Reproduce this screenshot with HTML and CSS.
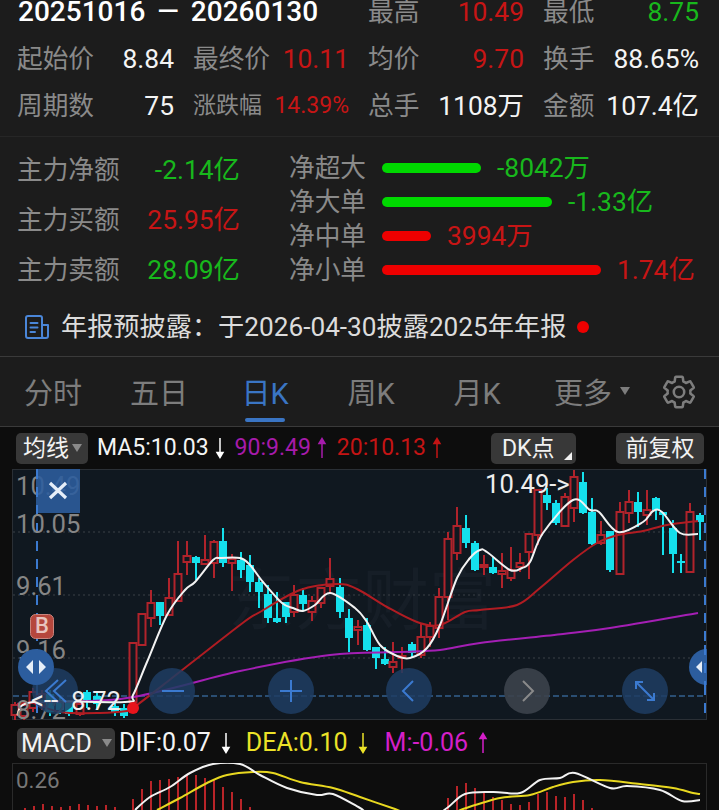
FILE: index.html
```html
<!DOCTYPE html>
<html lang="zh-CN">
<head>
<meta charset="utf-8">
<title>日K</title>
<link rel="stylesheet" href="styles.css">
</head>
<body>
<section class="stats">
  <div class="cell span2"><span class="range">20251016 — 20260130</span></div>
  <div class="cell"><span class="lbl">最高</span><span class="red">10.49</span></div>
  <div class="cell"><span class="lbl">最低</span><span class="green">8.75</span></div>
  <div class="cell"><span class="lbl">起始价</span><span class="white">8.84</span></div>
  <div class="cell"><span class="lbl">最终价</span><span class="red">10.11</span></div>
  <div class="cell"><span class="lbl">均价</span><span class="red">9.70</span></div>
  <div class="cell"><span class="lbl">换手</span><span class="white">88.65%</span></div>
  <div class="cell"><span class="lbl">周期数</span><span class="white">75</span></div>
  <div class="cell small"><span class="lbl">涨跌幅</span><span class="red">14.39%</span></div>
  <div class="cell"><span class="lbl">总手</span><span class="white">1108万</span></div>
  <div class="cell"><span class="lbl">金额</span><span class="white">107.4亿</span></div>
</section>

<section class="flows">
  <div class="flow-main">
    <div class="cell"><span class="lbl">主力净额</span><span class="green">-2.14亿</span></div>
    <div class="cell"><span class="lbl">主力买额</span><span class="red">25.95亿</span></div>
    <div class="cell"><span class="lbl">主力卖额</span><span class="green">28.09亿</span></div>
  </div>
  <div class="flow-bars">
    <div class="flow"><span class="lbl flow-lbl">净超大</span><i class="bar bar-green" style="width:99px"></i><span class="green">-8042万</span></div>
    <div class="flow"><span class="lbl flow-lbl">净大单</span><i class="bar bar-green" style="width:170px"></i><span class="green">-1.33亿</span></div>
    <div class="flow"><span class="lbl flow-lbl">净中单</span><i class="bar bar-red" style="width:49px"></i><span class="red">3994万</span></div>
    <div class="flow"><span class="lbl flow-lbl">净小单</span><i class="bar bar-red" style="width:219px"></i><span class="red">1.74亿</span></div>
  </div>
</section>

<section class="notice">
  <svg class="doc-icon" viewBox="0 0 24 24" fill="none" stroke="#4a86d8" stroke-width="2" stroke-linecap="round" stroke-linejoin="round">
    <path d="M17 23H3a2 2 0 0 1-2-2V3a2 2 0 0 1 2-2h12a2 2 0 0 1 2 2v18a2 2 0 0 0 2 2h2a2 2 0 0 0 2-2V10h-6"/>
    <path d="M5.500 8h7M5.500 12.500h7M5.500 17h4.500"/>
  </svg>
  <span class="notice-text">年报预披露：于2026-04-30披露2025年年报</span>
  <i class="notice-dot"></i>
</section>

<nav class="tabs">
  <span class="tab">分时</span>
  <span class="tab">五日</span>
  <span class="tab tab-active">日K</span>
  <span class="tab">周K</span>
  <span class="tab">月K</span>
  <span class="tab">更多<i class="tab-caret"></i></span>
  <svg class="gear" viewBox="0 0 24 24" fill="none" stroke="#7d7d7d" stroke-width="1.600" stroke-linejoin="round">
    <path d="M19.140 12.940c.04-.3.06-.61.06-.94 0-.32-.02-.64-.07-.94l2.030-1.580c.18-.14.23-.41.12-.61l-1.920-3.320c-.12-.22-.37-.29-.59-.22l-2.390.96c-.5-.38-1.030-.7-1.620-.94l-.36-2.540c-.04-.24-.24-.41-.48-.41h-3.840c-.24 0-.43.17-.47.41l-.36 2.540c-.59.24-1.130.57-1.620.94l-2.390-.96c-.22-.08-.47 0-.59.22L2.740 8.870c-.12.21-.08.47.12.61l2.030 1.580c-.05.3-.09.63-.09.94s.02.64.07.94l-2.030 1.580c-.18.14-.23.41-.12.61l1.920 3.320c.12.22.37.29.59.22l2.390-.96c.5.38 1.030.7 1.620.94l.36 2.540c.05.24.24.41.48.41h3.840c.24 0 .44-.17.47-.41l.36-2.540c.59-.24 1.130-.56 1.620-.94l2.390.96c.22.08.47 0 .59-.22l1.920-3.320c.12-.22.07-.47-.12-.61l-2.010-1.580z"/>
    <circle cx="12" cy="12" r="3.300"/>
  </svg>
</nav>

<div class="toolbar">
  <span class="chip chip-ma">均线<i class="chip-caret"></i></span>
  <span class="legend l-white">MA5:10.03</span>
  <svg class="arrow" viewBox="0 0 12 22"><path d="M6 1V19M3 15.500L6 20.500L9 15.500Z" stroke="#fff" fill="#fff" stroke-width="1.500"/></svg>
  <span class="legend l-purple">90:9.49</span>
  <svg class="arrow" viewBox="0 0 12 22"><path d="M6 21V3M3 6.500L6 1.500L9 6.500Z" stroke="#a61bab" fill="#a61bab" stroke-width="1.500"/></svg>
  <span class="legend l-red">20:10.13</span>
  <svg class="arrow" viewBox="0 0 12 22"><path d="M6 21V3M3 6.500L6 1.500L9 6.500Z" stroke="#c41414" fill="#c41414" stroke-width="1.500"/></svg>
  <span class="chip chip-dk">DK点<i class="chip-corner"></i></span>
  <span class="chip chip-fq">前复权</span>
</div>

<div class="kline">
  <svg class="chart-svg" viewBox="0 469 719 251" width="719" height="251">
    <rect class="frame" x="12.500" y="469.500" width="694" height="250"/>
    <text class="watermark" x="228" y="624">东方财富</text>
    <g class="grid">
      <path d="M13 532H706M13 595H706M13 658H706"/>
    </g>
    <path class="hline" d="M13 696H706"/>
    <g id="candles"></g>
    <g id="ma-lines"></g>
    <text class="price" x="16" y="495">10.49</text>
    <rect class="close-box" x="36" y="469" width="44" height="44"/>
    <path class="vline" d="M37 469V720M705 469V720"/>
    <path class="close-x" d="M50 483L66 498M66 483L50 498"/>
    <text class="price" x="16" y="533">10.05</text>
    <text class="price" x="16" y="595">9.61</text>
    <text class="price" x="16" y="659">9.16</text>
    <text class="price" x="16" y="719">8.72</text>

    <rect class="b-badge" x="30.500" y="614.500" width="23" height="24" rx="5"/>
    <text class="b-text" x="42" y="633">B</text>

    <circle class="btn" cx="55" cy="691" r="23"/>
    <path class="ico" d="M58 680L46 691L58 702M66 680L54 691L66 702"/>
    <circle class="btn" cx="172" cy="691" r="23"/>
    <path class="ico" d="M162 691H184"/>
    <circle class="btn" cx="291" cy="691" r="23"/>
    <path class="ico" d="M280 691H302M291 680V702"/>
    <circle class="btn" cx="409" cy="691" r="23"/>
    <path class="ico" d="M413 681L403 691L413 701"/>
    <circle class="btn-off" cx="527" cy="691" r="23"/>
    <path class="ico-off" d="M523 681L533 691L523 701"/>
    <circle class="btn" cx="645" cy="691" r="23"/>
    <path class="ico" d="M636 682L654 700M636 689V682H643M654 693V700H647"/>

    <circle class="handle" cx="36" cy="667" r="18"/>
    <path class="handle-ico" d="M33 660V674L26 667ZM39 660V674L46 667Z"/>
    <circle class="handle" cx="707" cy="667" r="18"/>
    <path class="handle-ico" d="M702 661V673L696 667Z"/>
    <rect class="handle-clip" x="707" y="640" width="12" height="60"/>
    <path class="vline" d="M705 645V690"/>

    <circle class="dot" cx="133" cy="708" r="6"/>
    <text class="extreme" x="31" y="709">&lt;--</text>
    <text class="extreme" x="71" y="710">8.72</text>
    <text class="extreme" x="485" y="493">10.49-&gt;</text>
  </svg>
</div>

<div class="toolbar toolbar-macd">
  <span class="chip chip-macd">MACD<i class="chip-caret"></i></span>
  <span class="legend l-white">DIF:0.07</span>
  <svg class="arrow" viewBox="0 0 12 22"><path d="M6 1V19M3 15.500L6 20.500L9 15.500Z" stroke="#fff" fill="#fff" stroke-width="1.500"/></svg>
  <span class="legend l-yellow">DEA:0.10</span>
  <svg class="arrow arrow-dea" viewBox="0 0 12 22"><path d="M6 1V19M3 15.500L6 20.500L9 15.500Z" stroke="#ece228" fill="#ece228" stroke-width="1.500"/></svg>
  <span class="legend l-magenta">M:-0.06</span>
  <svg class="arrow" viewBox="0 0 12 22"><path d="M6 21V3M3 6.500L6 1.500L9 6.500Z" stroke="#d41fc8" fill="#d41fc8" stroke-width="1.500"/></svg>
</div>

<div class="macd">
  <svg class="chart-svg" viewBox="0 763 719 47" width="719" height="47">
    <rect class="frame-macd" x="12.500" y="763.500" width="694" height="60"/>
    <g id="macd-bars"></g>
    <g id="macd-lines"></g>
    <text class="price-sm" x="16" y="788">0.26</text>
  </svg>
</div>
<script src="script.js"></script>
</body>
</html>
```

FILE: styles.css
```css
* { box-sizing: border-box; }
html, body { margin: 0; padding: 0; }
body {
  width: 719px;
  height: 810px;
  overflow: hidden;
  background: #1c1c1c;
  font-family: Roboto, "Noto Sans CJK SC", sans-serif;
  font-size: 26px;
  color: #fff;
}
i { display: block; }

.lbl { color: #8a8a8a; font-size: 25.7px; }
.red { color: #c71515; font-size: 26.4px; }
.green { color: #18b81c; font-size: 26.4px; }
.white { color: #f4f4f4; font-size: 26.4px; }

.stats {
  margin-top: -12px;
  height: 149px;
  padding: 0 20px 0 17px;
  display: grid;
  grid-template-columns: 157px repeat(3, 156px);
  grid-auto-rows: 47px;
  column-gap: 19px;
  border-bottom: 1px solid #262626;
}
.span2 { grid-column: span 2; }
.cell {
  display: flex;
  justify-content: space-between;
  align-items: center;
  line-height: 30px;
  white-space: nowrap;
}
.small span { font-size: 23px; }
.range { font-size: 28px; font-weight: 500; color: #fff; margin-left: 1px; word-spacing: 5px; }

.flows {
  height: 162px;
  padding: 8px 0 0 17px;
  display: flex;
}
.flow-main {
  width: 223px;
  display: grid;
  grid-auto-rows: 50px;
}
.flow-bars {
  margin-left: 49px;
  padding-top: 6px;
  display: grid;
  grid-auto-rows: 34px;
}
.flow {
  display: flex;
  align-items: center;
  line-height: 30px;
  white-space: nowrap;
}
.flow-lbl { width: 93px; }
.bar { height: 10px; border-radius: 5px; margin-right: 16px; }
.bar-green { background: #00d800; }
.bar-red { background: #ee0000; }

.notice {
  height: 58px;
  padding: 0 0 1px 25px;
  display: flex;
  align-items: center;
  border-bottom: 1px solid #3a3a3a;
}
.doc-icon { width: 24px; height: 24px; flex: none; }
.notice-text { margin-left: 12px; color: #dcdcdc; font-size: 26.2px; line-height: 30px; white-space: nowrap; }
.notice-dot {
  width: 12px;
  height: 12px;
  margin-left: 11px;
  border-radius: 50%;
  background: #ee0000;
}

.tabs {
  height: 70px;
  display: flex;
  align-items: center;
  border-bottom: 1px solid #3a3a3a;
  padding-top: 4px;
}
.tab {
  position: relative;
  flex: none;
  width: 106px;
  display: flex;
  justify-content: center;
  align-items: center;
  font-size: 29px;
  line-height: 40px;
  color: #7d7d7d;
}
.tab-active { color: #3a75c4; }
.tab-active::after {
  content: "";
  position: absolute;
  left: 33px;
  bottom: -8px;
  width: 40px;
  height: 4px;
  border-radius: 2px;
  background: #3a75c4;
}
.tab-caret {
  width: 0;
  height: 0;
  margin: -6px -18px 0 8px;
  border-left: 5px solid transparent;
  border-right: 5px solid transparent;
  border-top: 8px solid #7d7d7d;
}
.gear { width: 38px; height: 38px; margin: -4px 0 0 24px; flex: none; }

.toolbar {
  height: 42px;
  padding: 0 15px 0 16px;
  display: flex;
  align-items: center;
  background: #0d0d0d;
  font-size: 23px;
  white-space: nowrap;
}
.chip {
  height: 31px;
  display: flex;
  align-items: center;
  border-radius: 5px;
  background: #383838;
  color: #f2f2f2;
  line-height: 31px;
  flex: none;
}
.chip-ma { width: 72px; padding-left: 7px; margin-right: 9px; }
.chip-caret {
  width: 0;
  height: 0;
  margin-left: 3px;
  border-left: 5px solid transparent;
  border-right: 5px solid transparent;
  border-top: 8px solid #8a8a8a;
}
.chip-dk { position: relative; width: 85px; padding-left: 11px; margin-left: auto; }
.chip-corner {
  position: absolute;
  right: 4px;
  bottom: 4px;
  width: 0;
  height: 0;
  border-left: 8px solid transparent;
  border-bottom: 8px solid #f2f2f2;
}
.chip-fq { width: 88px; margin-left: 40px; justify-content: center; }
.legend { line-height: 30px; }
.l-white { color: #f4f4f4; }
.l-purple { color: #a61bab; }
.l-red { color: #c41414; }
.l-yellow { color: #ece228; }
.l-magenta { color: #d41fc8; }
.arrow { width: 12px; height: 22px; margin: 0 9px 0 5px; flex: none; }

.kline { height: 251px; background: #0d0d0d; }
.chart-svg { display: block; }
.frame { fill: #101820; stroke: #2a2f35; }
.frame-macd { fill: #0d0d0d; stroke: #2a2a2a; }
.grid path { stroke: #3a4046; stroke-width: 1; stroke-dasharray: 2 3; fill: none; }
.hline { stroke: #33608f; stroke-width: 1.500; stroke-dasharray: 6 3; fill: none; }
.vline { stroke: #3b7ad0; stroke-width: 2; stroke-dasharray: 10 8; fill: none; }
.watermark {
  font-family: "Noto Sans CJK SC", sans-serif;
  font-size: 67px;
  fill: #161e27;
}
.price { font-family: Roboto, sans-serif; font-size: 25.6px; fill: #868686; }
.price-sm { font-family: Roboto, sans-serif; font-size: 22.4px; fill: #777; }
.extreme { font-family: Roboto, sans-serif; font-size: 25.6px; fill: #eee; }
.close-box { fill: #2c5d9e; fill-opacity: 0.88; }
.close-x { stroke: #e6eef8; stroke-width: 3.200; fill: none; }
.b-badge { fill: #b5473d; stroke: #c9857d; stroke-width: 1; }
.b-text { font-family: Roboto, sans-serif; font-size: 22px; font-weight: 500; fill: #e8c4bf; text-anchor: middle; }
.btn { fill: #1f3d63; fill-opacity: 0.85; }
.btn-off { fill: #3c434b; fill-opacity: 0.9; }
.ico { stroke: #3b7ad0; stroke-width: 2; fill: none; }
.ico-off { stroke: #8a8a8a; stroke-width: 2; fill: none; }
.handle { fill: #2c5d9e; }
.handle-ico { fill: #e6eef8; }
.handle-clip { fill: #0d0d0d; }
.dot { fill: #e8141c; }

.toolbar-macd { height: 43px; padding: 0 0 0 17px; font-size: 25px; }
.chip-macd { width: 98px; padding-left: 4px; margin-right: 4px; margin-top: 3px; }
.chip-macd .chip-caret { margin-left: 10px; }
.toolbar-macd .legend { margin-top: 3px; }
.toolbar-macd .arrow { margin: 3px 14px 0 9px; }
.toolbar-macd .arrow-dea { margin-right: 16px; }
.macd { height: 47px; background: #0d0d0d; }
```

FILE: script.js
```js
var NS = "http://www.w3.org/2000/svg";

function add(parent, tag, attrs) {
  var el = document.createElementNS(NS, tag);
  for (var k in attrs) el.setAttribute(k, attrs[k]);
  parent.appendChild(el);
  return el;
}

function smooth(p) {
  var d = "M" + p[0][0] + " " + p[0][1];
  for (var i = 0; i < p.length - 1; i++) {
    var a = p[i - 1] || p[i], b = p[i], c = p[i + 1], e = p[i + 2] || c;
    d += "C" + (b[0] + (c[0] - a[0]) / 6).toFixed(1) + " " + (b[1] + (c[1] - a[1]) / 6).toFixed(1) +
      " " + (c[0] - (e[0] - b[0]) / 6).toFixed(1) + " " + (c[1] - (e[1] - b[1]) / 6).toFixed(1) +
      " " + c[0] + " " + c[1];
  }
  return d;
}

/* x, kind (u = up, d = down), wick top, body top, body bottom, wick bottom */
var candles = [
  [15,"u",702,705,715,722],[24,"u",702,705,716,722],[33,"u",688,692,708,712],[42,"u",690,694,706,710],
  [50,"d",690,694,712,716],[60,"d",696,700,710,714],[69,"d",700,702,714,716],[80,"u",700,704,714,716],
  [87,"d",690,692,700,708],[97,"d",692,696,704,710],[115,"d",702,706,712,716],[124,"d",704,708,716,718],
  [133,"u",643,643,702,712],[142,"u",614,614,645,646],[151,"u",590,603,618,627],[160,"d",602,602,616,625],
  [169,"u",578,598,615,616],[178,"u",541,574,601,602],[187,"u",541,556,562,575],[196,"d",556,557,563,580],
  [205,"u",535,560,564,565],[214,"u",540,542,563,578],[223,"d",528,541,563,567],[232,"u",554,559,563,591],
  [241,"d",552,560,570,578],[250,"d",555,565,582,592],[259,"d",578,582,592,608],[268,"d",585,594,618,623],
  [277,"d",592,618,622,623],[286,"d",602,602,617,623],[294,"u",585,595,612,617],[303,"d",588,595,604,610],
  [312,"u",596,601,612,621],[321,"u",587,588,603,608],[330,"u",558,579,586,593],[340,"d",578,587,612,618],
  [349,"d",609,618,638,652],[358,"u",620,627,630,645],[367,"d",618,625,650,651],[376,"d",647,647,658,669],
  [385,"d",647,659,664,665],[393,"u",642,662,667,673],[402,"u",647,656,658,673],[412,"d",642,644,653,657],
  [421,"u",623,637,655,658],[430,"u",622,626,637,647],[439,"u",588,597,628,638],[448,"u",532,539,597,620],
  [457,"u",507,526,553,560],[466,"d",515,528,543,548],[475,"d",541,543,570,571],[484,"u",555,565,567,575],
  [493,"d",557,567,573,574],[502,"u",553,571,574,588],[511,"u",547,570,578,581],[520,"u",553,563,567,572],
  [529,"u",533,534,552,579],[538,"u",490,490,535,545],[547,"d",488,495,503,510],[556,"d",500,503,523,525],
  [565,"u",493,497,526,527],[574,"u",470,477,508,522],[583,"d",472,482,513,514],[592,"d",498,512,544,545],
  [601,"u",521,535,543,545],[610,"d",531,531,570,572],[620,"u",502,512,574,575],[629,"u",490,502,513,523],
  [638,"d",492,502,512,527],[647,"u",490,510,515,525],[656,"d",497,498,510,520],[663,"d",512,512,515,555],
  [673,"d",520,528,554,573],[681,"d",554,561,563,573],[690,"u",503,512,572,573],[700,"d",513,515,522,540]
];

var candleGroup = document.getElementById("candles");
candles.forEach(function (c) {
  var color = c[1] === "u" ? "#b0232b" : "#14e0ec";
  add(candleGroup, "path", {
    d: "M" + c[0] + " " + c[2] + "V" + c[5],
    stroke: color, "stroke-width": 2, fill: "none"
  });
  add(candleGroup, "rect", c[1] === "u" ? {
    x: c[0] - 3.5, y: c[3], width: 7, height: c[4] - c[3],
    fill: "#101820", stroke: color, "stroke-width": 2
  } : {
    x: c[0] - 4, y: c[3], width: 8, height: c[4] - c[3], fill: color
  });
});

var maLines = [
  ["#a41fb4", [[33,702],[127,698],[240,671],[330,655],[397,652],[440,650],[480,643],[563,634],[610,628],[698,613]]],
  ["#b01c22", [[17,704],[33,703],[60,712],[100,713],[127,711],[133,708],[167,682],[240,625],[260,612],[300,590],
    [337,584],[357,589],[387,607],[417,622],[440,625],[465,612],[480,610],[517,605],[540,588],[573,560],[597,543],
    [618,535],[643,531],[667,525],[698,521]]],
  ["#f2f2f2", [[17,715],[33,702],[125,702],[133,695],[147,662],[167,615],[185,590],[195,582],[213,560],[220,558],
    [240,558],[250,565],[263,582],[282,603],[293,608],[303,611],[315,605],[330,593],[355,608],[367,622],[380,645],
    [397,656],[410,658],[427,648],[440,625],[457,578],[470,558],[480,550],[487,552],[510,570],[522,568],[530,562],
    [543,533],[573,500],[590,510],[599,512],[618,532],[643,522],[653,511],[662,512],[680,533],[698,534]]]
];
var maGroup = document.getElementById("ma-lines");
maLines.forEach(function (l) {
  add(maGroup, "path", { d: smooth(l[1]), stroke: l[0], "stroke-width": 2, fill: "none" });
});

/* x, top */
var bars = [
  [25,808],[34,806],[43,804],[52,806],[61,807],[70,806],[79,804],[88,805],[97,806],[106,805],[115,807],
  [133,799],[142,789],[151,781],[160,780],[169,779],[178,777],[187,774],[196,775],[205,778],[214,780],
  [223,787],[232,792],[241,799],[250,807],[448,798],[457,786],[466,783],[475,788],[484,792],[493,797],
  [502,800],[511,804],[520,805],[529,802],[538,794],[547,792],[556,796],[565,797],[574,794],[583,800],[592,808]
];
var barGroup = document.getElementById("macd-bars");
bars.forEach(function (b) {
  add(barGroup, "path", { d: "M" + b[0] + " " + b[1] + "V810", stroke: "#b82428", "stroke-width": 2 });
});

var macdLines = [
  ["#e8d820", [[157,810],[180,798],[207,783],[227,775],[253,772],[273,773],[300,782],[333,788],[360,797],[395,809],
    [410,814],[450,814],[463,809],[500,798],[530,795],[553,787],[573,782],[600,780],[640,784],[673,788],[693,793],[700,794]]],
  ["#f2f2f2", [[135,810],[150,797],[170,787],[190,773],[213,764],[240,764],[260,775],[287,788],[317,795],[333,794],
    [360,808],[375,816],[430,816],[447,808],[465,794],[493,792],[520,793],[540,780],[560,778],[575,773],[610,788],
    [627,786],[660,790],[682,801],[700,800]]]
];
var macdGroup = document.getElementById("macd-lines");
macdLines.forEach(function (l) {
  add(macdGroup, "path", { d: smooth(l[1]), stroke: l[0], "stroke-width": 2, fill: "none" });
});
```
